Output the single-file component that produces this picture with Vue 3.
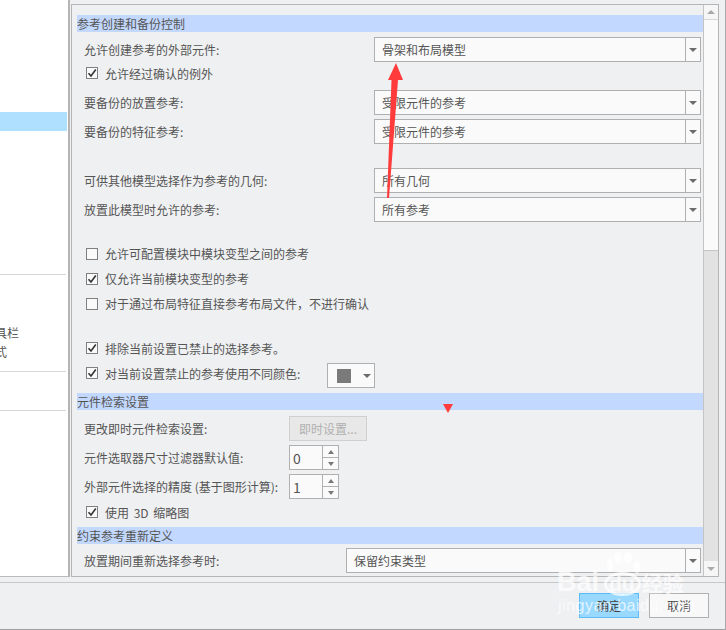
<script setup>
const sideRows = [
  { h: 112 },
  { h: 19, selected: true },
  { h: 144, line: true },
  { h: 97, line: true, texts: ['具栏', '式'] },
  { h: 39, line: true },
  { h: 165 }
]
const trefRows = [
  { label: '要备份的放置参考:', value: '受限元件的参考' },
  { label: '要备份的特征参考:', value: '受限元件的参考' }
]
const geomRows = [
  { label: '可供其他模型选择作为参考的几何:', value: '所有几何' },
  { label: '放置此模型时允许的参考:', value: '所有参考' }
]
const checks = [
  { label: '允许可配置模块中模块变型之间的参考', on: false },
  { label: '仅允许当前模块变型的参考', on: true },
  { label: '对于通过布局特征直接参考布局文件，不进行确认', on: false }
]
const spins = [
  { label: '元件选取器尺寸过滤器默认值:', value: '0' },
  { label: '外部元件选择的精度 (基于图形计算):', value: '1' }
]
</script>

<template>
  <div class="window">
    <div class="main">
      <aside class="side">
        <div
          v-for="(r, i) in sideRows"
          :key="i"
          class="side-row"
          :class="{ selected: r.selected, lined: r.line }"
          :style="{ height: r.h + 'px' }"
        >
          <div v-if="r.texts" class="side-texts">
            <span v-for="t in r.texts" :key="t">{{ t }}</span>
          </div>
        </div>
      </aside>
      <section class="panel">
        <div class="content">
          <h3 class="head">参考创建和备份控制</h3>
          <div class="row r-first">
            <label>允许创建参考的外部元件:</label>
            <div class="select"><span>骨架和布局模型</span><i class="drop"><b></b></i></div>
          </div>
          <div class="check c-first">
            <span class="box on"><svg viewBox="0 0 10 10"><path d="M1.5 5.2 4 8 8.8 1.6" /></svg></span>
            允许经过确认的例外
          </div>
          <div class="group g-backup">
            <div v-for="r in trefRows" :key="r.label" class="row">
              <label>{{ r.label }}</label>
              <div class="select"><span>{{ r.value }}</span><i class="drop"><b></b></i></div>
            </div>
          </div>
          <div class="group g-geom">
            <div v-for="r in geomRows" :key="r.label" class="row">
              <label>{{ r.label }}</label>
              <div class="select"><span>{{ r.value }}</span><i class="drop"><b></b></i></div>
            </div>
          </div>
          <div class="checks">
            <div v-for="c in checks" :key="c.label" class="check">
              <span class="box" :class="{ on: c.on }">
                <svg v-if="c.on" viewBox="0 0 10 10"><path d="M1.5 5.2 4 8 8.8 1.6" /></svg>
              </span>
              {{ c.label }}
            </div>
          </div>
          <div class="check c-excl">
            <span class="box on"><svg viewBox="0 0 10 10"><path d="M1.5 5.2 4 8 8.8 1.6" /></svg></span>
            排除当前设置已禁止的选择参考。
          </div>
          <div class="check c-color">
            <span class="box on"><svg viewBox="0 0 10 10"><path d="M1.5 5.2 4 8 8.8 1.6" /></svg></span>
            <span class="c-color-label">对当前设置禁止的参考使用不同颜色:</span>
            <div class="color"><em></em><b></b></div>
          </div>
          <h3 class="head h-search">元件检索设置</h3>
          <div class="row r-instant">
            <label>更改即时元件检索设置:</label>
            <button class="instant" disabled>即时设置...</button>
          </div>
          <div class="spins">
            <div v-for="s in spins" :key="s.label" class="row">
              <label>{{ s.label }}</label>
              <div class="spin">
                <span>{{ s.value }}</span>
                <div class="spin-btns">
                  <i><b class="up"></b></i>
                  <i><b></b></i>
                </div>
              </div>
            </div>
          </div>
          <div class="check c-3d">
            <span class="box on"><svg viewBox="0 0 10 10"><path d="M1.5 5.2 4 8 8.8 1.6" /></svg></span>
            <span>使用 3D 缩略图</span>
          </div>
          <h3 class="head h-cons">约束参考重新定义</h3>
          <div class="row r-cons">
            <label>放置期间重新选择参考时:</label>
            <div class="select wide"><span>保留约束类型</span><i class="drop"><b></b></i></div>
          </div>
        </div>
        <div class="scrollbar">
          <div class="sb-btn"><b class="up"></b></div>
          <div class="sb-thumb"></div>
          <div class="sb-track"></div>
          <div class="sb-btn sb-down"><b></b></div>
        </div>
      </section>
    </div>
    <footer class="footer">
      <button class="btn primary">确定</button>
      <button class="btn">取消</button>
    </footer>

    <svg class="arrow" viewBox="0 0 726 630">
      <path d="M396 63 403 80 398 80 389 198 387 198 391.5 80 388 80Z" />
    </svg>
    <i class="marker"></i>
    <div class="mark">
      <svg class="paw" viewBox="0 0 44 44">
        <ellipse cx="11" cy="13" rx="3.5" ry="6" />
        <ellipse cx="19" cy="6" rx="4" ry="6" />
        <ellipse cx="29" cy="6" rx="4" ry="6" />
        <ellipse cx="38" cy="15" rx="3.5" ry="6" />
        <ellipse class="ring" cx="23.5" cy="32" rx="17" ry="10.5" />
      </svg>
      <div class="mark-main">Bai<span class="du">du</span><span class="jy">经验</span></div>
      <div class="mark-sub">jingyan.baidu.com</div>
    </div>
  </div>
</template>

<style>
html, body { margin: 0; background: #eff0f2; }
</style>

<style scoped>
.window {
  position: relative;
  width: 726px;
  height: 630px;
  overflow: hidden;
  display: flex;
  flex-direction: column;
  box-sizing: border-box;
  background: #eff0f2;
  border-bottom: 1px solid #a0a0a0;
  border-right: 1px solid #a8a8a8;
  font-family: "Noto Sans CJK SC", "Liberation Sans", sans-serif;
  font-size: 12px;
  color: #555;
}
.main { display: flex; height: 577px; flex: none; }
.side {
  width: 68px;
  height: 577px;
  flex: none;
  box-sizing: content-box;
  background: #fff;
  border-right: 2px solid #b5b5b5;
  overflow: hidden;
}
.side-row { box-sizing: border-box; position: relative; }
.side-row:last-child { border-bottom: 1px solid #bbb; height: 166px !important; }
.side-row.selected { background: #b0e0ff; margin-right: 1px; }
.side-row.lined { border-bottom: 1px solid #d8d8d8; margin-right: 2px; }
.side-texts {
  position: absolute;
  right: 0;
  left: 0;
  top: 48px;
  display: flex;
  flex-direction: column;
  line-height: 19px;
  white-space: nowrap;
}
.side-texts span { height: 19px; margin-left: -5px; }
.panel {
  width: 648px;
  height: 573px;
  margin: 4px 0 0 1px;
  flex: none;
  display: flex;
  box-sizing: border-box;
  border: 1px solid #b5b5b5;
  background: #eff0f2;
}
.content { width: 626px; margin-left: 5px; flex: none; }
.head {
  margin: 0;
  height: 17px;
  line-height: 17px;
  font-size: 12px;
  font-weight: 400;
  background: #c2d8ff;
  color: #555;
  width: 626px;
}
.head:first-child { margin-top: 10px; }
.row {
  display: flex;
  align-items: center;
  justify-content: space-between;
  height: 25px;
  padding: 0 2px 0 7px;
}
.row label { white-space: nowrap; }
.r-first { margin-top: 5px; }
.select {
  width: 327px;
  height: 25px;
  box-sizing: border-box;
  border: 1px solid #b0b0b0;
  background: #fafafa;
  display: flex;
  align-items: center;
  padding-left: 7px;
  position: relative;
  flex: none;
}
.select.wide { width: 355px; }
.select span { flex: 1; }
.drop {
  width: 14px;
  height: 23px;
  border-left: 1px solid #b0b0b0;
  display: flex;
  align-items: center;
  justify-content: center;
  flex: none;
}
.drop b, .color b, .spin-btns b, .sb-btn b {
  display: block;
  width: 0;
  height: 0;
  border-left: 4px solid transparent;
  border-right: 4px solid transparent;
  border-top: 4px solid #6c6c6c;
}
.check {
  display: flex;
  align-items: center;
  height: 25px;
  padding-left: 9px;
  gap: 7px;
}
.box {
  width: 10px;
  height: 10px;
  border: 1px solid #808080;
  background: #fafafa;
  flex: none;
  display: block;
}
.box svg { display: block; width: 10px; height: 10px; }
.box path { fill: none; stroke: #333; stroke-width: 1.6; }
.c-first { height: 22px; margin-bottom: 6px; }
.g-backup { display: flex; flex-direction: column; gap: 4px; }
.g-geom { display: flex; flex-direction: column; gap: 4px; margin-top: 24px; }
.checks { margin-top: 19px; display: flex; flex-direction: column; }
.c-excl { margin-top: 20px; height: 24px; }
.c-color { height: 24px; margin-top: 1px; }
.c-color-label { width: 222px; flex: none; white-space: nowrap; }
.color {
  width: 48px;
  height: 25px;
  box-sizing: border-box;
  border: 1px solid #b0b0b0;
  background: #fafafa;
  display: flex;
  align-items: center;
  gap: 12px;
  padding-left: 9px;
  margin: 2px 0 0 -7px;
  align-self: flex-start;
  flex: none;
}
.color em { width: 14px; height: 14px; background: #7a7a7a; display: block; }
.h-search { margin-top: 8px; }
.r-instant { justify-content: flex-start; margin-top: 6px; }
.r-instant label { width: 205px; flex: none; }
.instant {
  width: 78px;
  height: 25px;
  box-sizing: border-box;
  border: 1px solid #d0d0d0;
  background: #e8e8e8;
  color: #b0b0b0;
  font: inherit;
  padding: 0;
}
.spins { display: flex; flex-direction: column; gap: 4px; margin-top: 4px; }
.spins .row { justify-content: flex-start; }
.spins label { width: 205px; flex: none; }
.spin {
  width: 50px;
  height: 25px;
  box-sizing: border-box;
  border: 1px solid #b0b0b0;
  background: #fafafa;
  display: flex;
  align-items: center;
  font-size: 14px;
  padding-left: 3px;
}
.spin span { flex: 1; }
.spin-btns {
  width: 15px;
  height: 23px;
  border-left: 1px solid #b0b0b0;
  display: flex;
  flex-direction: column;
}
.spin-btns i {
  flex: 1;
  display: flex;
  align-items: center;
  justify-content: center;
}
.spin-btns i + i { border-top: 1px solid #b0b0b0; }
.spin-btns b { border-left-width: 3px; border-right-width: 3px; border-top: 4px solid #777; }
.spin-btns b.up, .sb-btn b.up { transform: rotate(180deg); }
.c-3d { margin-top: 1px; height: 24px; word-spacing: 2px; }
.h-cons { margin-top: 3px; }
.r-cons { margin-top: 4px; }
.scrollbar {
  width: 15px;
  flex: none;
  box-sizing: border-box;
  display: flex;
  flex-direction: column;
  border-left: 1px solid #c4c4c4;
}
.sb-btn {
  height: 15px;
  flex: none;
  background: #f6f6f6;
  display: flex;
  align-items: center;
  justify-content: center;
  border-bottom: 1px solid #d8d8d8;
  box-sizing: border-box;
}
.sb-down { border-bottom: none; }
.sb-btn b { border-top-color: #aaa; }
.sb-thumb { height: 231px; flex: none; background: #fafafa; border-bottom: 1px solid #c4c4c4; box-sizing: border-box; }
.sb-track { flex: 1; background: #e2e2e2; }
.footer {
  flex: 1;
  display: flex;
  justify-content: flex-end;
  align-items: flex-start;
  gap: 10px;
  padding: 10px 16px 0 0;
  margin-top: 5px;
  border-top: 1px solid #c8c8c8;
}
.btn {
  width: 60px;
  height: 25px;
  box-sizing: border-box;
  border: 1px solid #b0b0b0;
  background: #f8f8f8;
  color: #444;
  font: inherit;
  padding: 0;
}
.btn.primary { background: #99d9ff; border-color: #5cbcf5; }
.arrow {
  position: absolute;
  left: 0;
  top: 0;
  width: 726px;
  height: 630px;
  pointer-events: none;
}
.arrow path { fill: #ff3b3b; }
.marker {
  position: absolute;
  left: 443px;
  top: 404px;
  width: 0;
  height: 0;
  border-left: 5px solid transparent;
  border-right: 5px solid transparent;
  border-top: 9px solid #ff3b3b;
}
.mark {
  position: absolute;
  left: 555px;
  top: 550px;
  width: 170px;
  height: 70px;
  color: rgba(255, 255, 255, 0.72);
  pointer-events: none;
  font-family: "Liberation Sans", "Noto Sans CJK SC", sans-serif;
}
.paw {
  position: absolute;
  left: 44px;
  top: 2px;
  width: 44px;
  height: 44px;
  fill: rgba(255, 255, 255, 0.72);
}
.paw .ring { fill: none; stroke: rgba(255, 255, 255, 0.72); stroke-width: 3; }
.mark-main {
  position: absolute;
  left: 2px;
  top: 19px;
  font-size: 27px;
  line-height: 27px;
  font-weight: 700;
  white-space: nowrap;
}
.du { font-size: 21px; margin-left: 10px; }
.jy { font-size: 21px; font-weight: 700; margin-left: 7px; }
.mark-sub {
  position: absolute;
  left: 3px;
  top: 47px;
  font-size: 16px;
  line-height: 18px;
  letter-spacing: 0.5px;
  white-space: nowrap;
}
</style>
